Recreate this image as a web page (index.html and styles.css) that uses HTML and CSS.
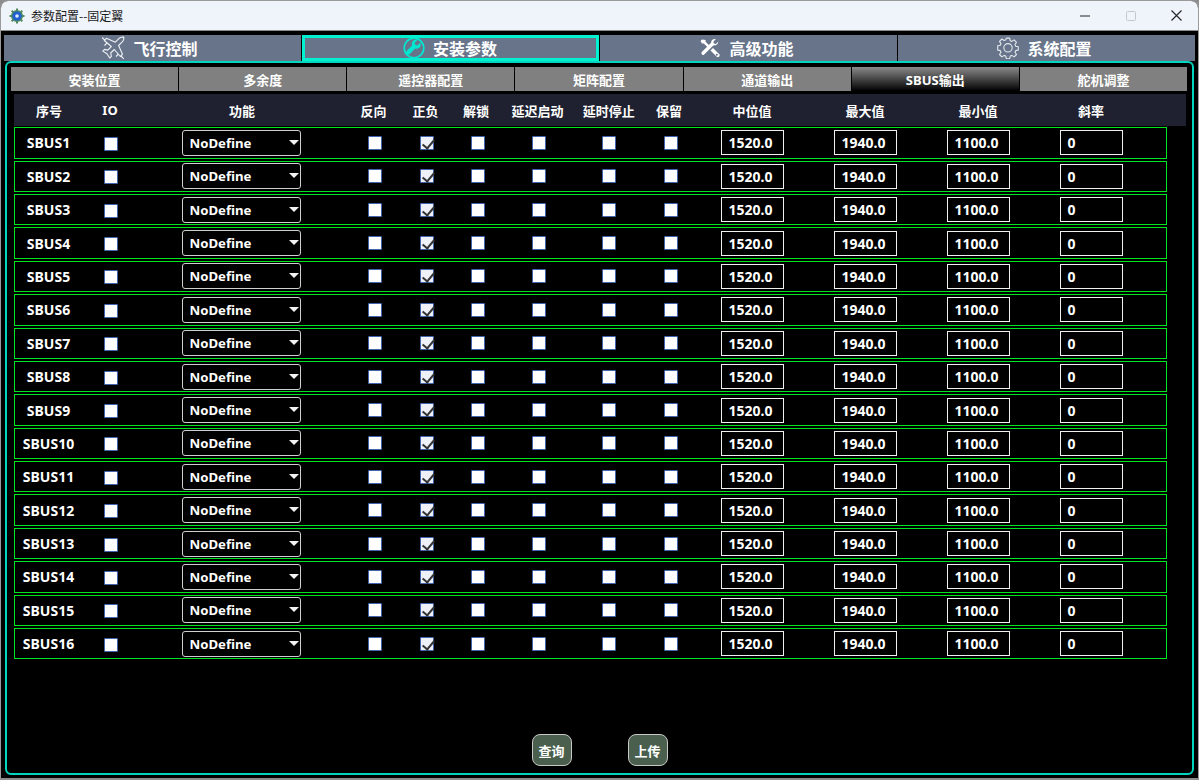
FILE: index.html
```html
<!DOCTYPE html>
<html lang="zh">
<head>
<meta charset="utf-8">
<title>参数配置--固定翼</title>
<link rel="stylesheet" href="styles.css">
</head>
<body>
<div class="window">
  <header class="titlebar">
    <svg class="appicon" viewBox="0 0 16 16"><circle cx="8" cy="8" r="6" fill="#4f8a63"/><g stroke="#4f8a63" stroke-width="2"><path d="M8 0.5V15.5M0.5 8H15.5M2.7 2.7L13.3 13.3M13.3 2.7L2.7 13.3"/></g><circle cx="8" cy="8" r="4.6" fill="#1f5fd0"/><circle cx="8" cy="8" r="1.8" fill="#dfeaff"/></svg>
    <span class="title">参数配置--固定翼</span>
    <div class="controls">
      <svg class="ctl-min" viewBox="0 0 10 10"><path d="M0 5H10" stroke="#222" stroke-width="1"/></svg>
      <svg class="ctl-max" viewBox="0 0 10 10"><rect x=".5" y=".5" width="9" height="9" rx="1" fill="none" stroke="#c4c6cc"/></svg>
      <svg class="ctl-close" viewBox="0 0 11 11"><path d="M.5 .5L10.500 10.500M10.500 .5L.5 10.500" stroke="#222" stroke-width="1.100"/></svg>
    </div>
  </header>
  <nav class="tabs">
    <div class="tab">
      <svg class="ticon plane" viewBox="0 0 24 24" fill="none" stroke="#eef1f5" stroke-width="1.100" stroke-linejoin="round"><path d="M22.800 1.800c-1-1.200-3.600-.6-5.200 1L14.300 6.200 5.500 2.300 3.300 4.500l7 6-3.500 3.600-3.300-.7-1.700 1.700 4.200 2.700 2.700 4.200 1.700-1.700-.7-3.300 3.600-3.500 6 7 2.200-2.200-3.900-8.800 3.400-3.300c1.600-1.600 2.400-4.400 1.500-5.400z"/><path d="M1.200 1.500l2.800 2.800M20 20l2.800 2.800M3.500 9.500l2.500-2.500M15 20.500l2.500-2.500"/></svg>
      <span>飞行控制</span>
    </div>
    <div class="tab active">
      <svg class="ticon" viewBox="0 0 22 22"><circle cx="11" cy="11" r="9.800" fill="none" stroke="#00e6d0" stroke-width="1.700"/><path d="M17.500 5.500l-3.200 2.900-2-.6-.6-2 3-3c-2.800-.8-5.900 1-5.900 4 0 .7.100 1.200.3 1.700l-5.300 5.300c-.9.900-.9 2.200 0 3.100s2.200.9 3.100 0l5.300-5.300c3.200 1.100 6.600-2 5.300-6.100z" fill="#00e6d0"/></svg>
      <span>安装参数</span>
    </div>
    <div class="tab">
      <svg class="ticon" viewBox="0 0 22 22"><path d="M3 2.500L1.500 4l1.500 2.500h1.800l5.500 5.500 1.800-1.800-5.500-5.500V3z" fill="#fff"/><path d="M19.500 4.500l-2.700 2.600-2-.5-.4-1.900 2.500-2.600c-2.500-.7-5 1-4.800 3.700l-9.300 9.300c-1.100 1.100.1 3.400 1.900 2.900l9.600-9.600c2.700.3 5.400-1.400 4.700-3.900z" fill="#fff"/><path d="M11.500 13.500l2.500-2.500 6.500 6.500c.8 1.500-1 3.200-2.500 2.500z" fill="#fff"/><circle cx="17.800" cy="17.800" r="1" fill="#67748a"/></svg>
      <span>高级功能</span>
    </div>
    <div class="tab">
      <svg class="ticon" viewBox="0 0 22 22" fill="none" stroke="#e4e8ee" stroke-width="1.100" stroke-linejoin="round"><path d="M9.300 1.500h3.400l.5 2.600 1.700.7 2.200-1.500 2.400 2.400-1.500 2.200.7 1.700 2.600.5v3.400l-2.600.5-.7 1.700 1.500 2.200-2.400 2.400-2.200-1.500-1.700.7-.5 2.600H9.300l-.5-2.600-1.700-.7-2.200 1.500-2.400-2.400 1.500-2.200-.7-1.700-2.600-.5V9.200l2.600-.5.7-1.700-1.500-2.200 2.400-2.400 2.200 1.500 1.700-.7z" transform="translate(0 -.4)"/><circle cx="11" cy="10.800" r="4.200"/></svg>
      <span>系统配置</span>
    </div>
  </nav>
  <main class="panel">
    <div class="subtabs">
      <div class="subtab">安装位置</div>
      <div class="subtab">多余度</div>
      <div class="subtab">遥控器配置</div>
      <div class="subtab">矩阵配置</div>
      <div class="subtab">通道输出</div>
      <div class="subtab on">SBUS输出</div>
      <div class="subtab">舵机调整</div>
    </div>
    <div class="head">
      <span>序号</span><span>IO</span><span>功能</span><span>反向</span><span>正负</span><span>解锁</span><span>延迟启动</span><span>延时停止</span><span>保留</span><span>中位值</span><span>最大值</span><span>最小值</span><span>斜率</span>
    </div>
    <div class="rows">
      <div class="row"><span class="name">SBUS1</span><i class="cb io"></i><div class="sel">NoDefine</div><i class="cb"></i><i class="cb ck"></i><i class="cb"></i><i class="cb"></i><i class="cb"></i><i class="cb"></i><div class="num">1520.0</div><div class="num">1940.0</div><div class="num">1100.0</div><div class="num">0</div></div>
      <div class="row"><span class="name">SBUS2</span><i class="cb io"></i><div class="sel">NoDefine</div><i class="cb"></i><i class="cb ck"></i><i class="cb"></i><i class="cb"></i><i class="cb"></i><i class="cb"></i><div class="num">1520.0</div><div class="num">1940.0</div><div class="num">1100.0</div><div class="num">0</div></div>
      <div class="row"><span class="name">SBUS3</span><i class="cb io"></i><div class="sel">NoDefine</div><i class="cb"></i><i class="cb ck"></i><i class="cb"></i><i class="cb"></i><i class="cb"></i><i class="cb"></i><div class="num">1520.0</div><div class="num">1940.0</div><div class="num">1100.0</div><div class="num">0</div></div>
      <div class="row"><span class="name">SBUS4</span><i class="cb io"></i><div class="sel">NoDefine</div><i class="cb"></i><i class="cb ck"></i><i class="cb"></i><i class="cb"></i><i class="cb"></i><i class="cb"></i><div class="num">1520.0</div><div class="num">1940.0</div><div class="num">1100.0</div><div class="num">0</div></div>
      <div class="row"><span class="name">SBUS5</span><i class="cb io"></i><div class="sel">NoDefine</div><i class="cb"></i><i class="cb ck"></i><i class="cb"></i><i class="cb"></i><i class="cb"></i><i class="cb"></i><div class="num">1520.0</div><div class="num">1940.0</div><div class="num">1100.0</div><div class="num">0</div></div>
      <div class="row"><span class="name">SBUS6</span><i class="cb io"></i><div class="sel">NoDefine</div><i class="cb"></i><i class="cb ck"></i><i class="cb"></i><i class="cb"></i><i class="cb"></i><i class="cb"></i><div class="num">1520.0</div><div class="num">1940.0</div><div class="num">1100.0</div><div class="num">0</div></div>
      <div class="row"><span class="name">SBUS7</span><i class="cb io"></i><div class="sel">NoDefine</div><i class="cb"></i><i class="cb ck"></i><i class="cb"></i><i class="cb"></i><i class="cb"></i><i class="cb"></i><div class="num">1520.0</div><div class="num">1940.0</div><div class="num">1100.0</div><div class="num">0</div></div>
      <div class="row"><span class="name">SBUS8</span><i class="cb io"></i><div class="sel">NoDefine</div><i class="cb"></i><i class="cb ck"></i><i class="cb"></i><i class="cb"></i><i class="cb"></i><i class="cb"></i><div class="num">1520.0</div><div class="num">1940.0</div><div class="num">1100.0</div><div class="num">0</div></div>
      <div class="row"><span class="name">SBUS9</span><i class="cb io"></i><div class="sel">NoDefine</div><i class="cb"></i><i class="cb ck"></i><i class="cb"></i><i class="cb"></i><i class="cb"></i><i class="cb"></i><div class="num">1520.0</div><div class="num">1940.0</div><div class="num">1100.0</div><div class="num">0</div></div>
      <div class="row"><span class="name">SBUS10</span><i class="cb io"></i><div class="sel">NoDefine</div><i class="cb"></i><i class="cb ck"></i><i class="cb"></i><i class="cb"></i><i class="cb"></i><i class="cb"></i><div class="num">1520.0</div><div class="num">1940.0</div><div class="num">1100.0</div><div class="num">0</div></div>
      <div class="row"><span class="name">SBUS11</span><i class="cb io"></i><div class="sel">NoDefine</div><i class="cb"></i><i class="cb ck"></i><i class="cb"></i><i class="cb"></i><i class="cb"></i><i class="cb"></i><div class="num">1520.0</div><div class="num">1940.0</div><div class="num">1100.0</div><div class="num">0</div></div>
      <div class="row"><span class="name">SBUS12</span><i class="cb io"></i><div class="sel">NoDefine</div><i class="cb"></i><i class="cb ck"></i><i class="cb"></i><i class="cb"></i><i class="cb"></i><i class="cb"></i><div class="num">1520.0</div><div class="num">1940.0</div><div class="num">1100.0</div><div class="num">0</div></div>
      <div class="row"><span class="name">SBUS13</span><i class="cb io"></i><div class="sel">NoDefine</div><i class="cb"></i><i class="cb ck"></i><i class="cb"></i><i class="cb"></i><i class="cb"></i><i class="cb"></i><div class="num">1520.0</div><div class="num">1940.0</div><div class="num">1100.0</div><div class="num">0</div></div>
      <div class="row"><span class="name">SBUS14</span><i class="cb io"></i><div class="sel">NoDefine</div><i class="cb"></i><i class="cb ck"></i><i class="cb"></i><i class="cb"></i><i class="cb"></i><i class="cb"></i><div class="num">1520.0</div><div class="num">1940.0</div><div class="num">1100.0</div><div class="num">0</div></div>
      <div class="row"><span class="name">SBUS15</span><i class="cb io"></i><div class="sel">NoDefine</div><i class="cb"></i><i class="cb ck"></i><i class="cb"></i><i class="cb"></i><i class="cb"></i><i class="cb"></i><div class="num">1520.0</div><div class="num">1940.0</div><div class="num">1100.0</div><div class="num">0</div></div>
      <div class="row"><span class="name">SBUS16</span><i class="cb io"></i><div class="sel">NoDefine</div><i class="cb"></i><i class="cb ck"></i><i class="cb"></i><i class="cb"></i><i class="cb"></i><i class="cb"></i><div class="num">1520.0</div><div class="num">1940.0</div><div class="num">1100.0</div><div class="num">0</div></div>
    </div>
    <footer class="actions">
      <button class="btn">查询</button>
      <button class="btn">上传</button>
    </footer>
  </main>
</div>
</body>
</html>
```
FILE: styles.css
```css
* { box-sizing: border-box; }
html, body { margin: 0; height: 100%; }
body {
  background: #8d8d8d;
  font-family: "Noto Sans", "Noto Sans CJK SC", sans-serif;
  overflow: hidden;
}
.window {
  width: 1199px;
  height: 778px;
  background: #000;
  border: 1px solid #9a9a9a;
  border-bottom: 0;
  border-radius: 8px 8px 0 0;
  display: flex;
  flex-direction: column;
  overflow: hidden;
}
.titlebar {
  height: 30px;
  flex: none;
  background: #eff3fa;
  border-bottom: 1px solid #8c8c8c;
  display: flex;
  align-items: center;
  padding-left: 8px;
  color: #1a1a1a;
}
.appicon { width: 16px; height: 16px; flex: none; }
.title {
  font-family: "Noto Sans CJK SC", sans-serif;
  font-size: 12px;
  margin-left: 6px;
}
.controls {
  margin-left: auto;
  display: flex;
  align-items: center;
  padding-right: 16px;
}
.ctl-min { width: 10px; height: 10px; }
.ctl-max { width: 10px; height: 10px; margin-left: 36px; }
.ctl-close { width: 11px; height: 11px; margin-left: 35px; }
.tabs {
  flex: none;
  display: grid;
  grid-template-columns: repeat(4, 1fr);
  grid-template-rows: 26px;
  gap: 1px;
  height: 26px;
  margin: 4px 3px 0;
}
.tab {
  background: #67748a;
  color: #fff;
  font-family: "Noto Sans CJK SC", sans-serif;
  font-weight: 700;
  font-size: 16px;
  line-height: 1;
  min-height: 0;
  display: flex;
  align-items: center;
  justify-content: center;
  gap: 8px;
  padding-right: 4px;
}
.tab.active { border: 3px solid #00f0d0; padding-right: 1px; }
.ticon { width: 22px; height: 22px; flex: none; }
.ticon.plane { width: 24px; height: 24px; margin-left: -2px; }
.panel {
  flex: 1;
  margin: 0 4px 3px;
  border: 2px solid #00d6bf;
  border-radius: 6px;
  padding: 4px 5px 0 4px;
  display: flex;
  flex-direction: column;
  min-height: 0;
}
.subtabs {
  display: grid;
  grid-template-columns: repeat(7, 1fr);
  gap: 1px;
  height: 24px;
  flex: none;
}
.subtab {
  background: #808080;
  color: #fff;
  font-size: 13px;
  font-weight: 700;
  display: flex;
  align-items: center;
  justify-content: center;
}
.subtab.on { background: linear-gradient(#8a8a8a, #000); }
.head, .row {
  display: grid;
  justify-items: center;
  align-items: center;
  color: #fff;
  font-weight: 700;
}
.head {
  flex: none;
  height: 32px;
  margin: 3px 1px 0 3px;
  padding-left: 1px;
  background: #1f2130;
  font-size: 13px;
  grid-template-columns: 68px 54px 210px 53px 51px 50px 73px 69.400px 51.200px 114.800px 111.200px 114.800px 111.200px;
}
.rows {
  flex: none;
  display: grid;
  grid-auto-rows: 31.400px;
  row-gap: 2px;
  margin: 1.200px 20px 0 3px;
}
.row {
  border: 1px solid #00e61e;
  font-size: 14px;
  grid-template-columns: 67px 57px 204px 64px 40px 62px 60px 80px 44px 118px 108px 118px 108px;
}
.cb {
  display: block;
  width: 14px;
  height: 14px;
  background: #fff;
  border: 1px solid #4263ad;
  border-radius: 1px;
  position: relative;
}
.cb.io { margin-top: 2px; }
.cb.ck { background: #eef1f8; }
.cb.ck::after {
  content: "";
  position: absolute;
  left: 4px;
  top: 0;
  width: 5px;
  height: 10px;
  border: solid #333;
  border-width: 0 2px 2px 0;
  transform: rotate(40deg);
}
.sel {
  width: 119px;
  height: 26px;
  border: 1px solid #cfcfcf;
  border-radius: 3px;
  padding-left: 7px;
  font-size: 13.200px;
  display: flex;
  align-items: center;
  position: relative;
}
.sel::after {
  content: "";
  position: absolute;
  right: 1px;
  top: 9px;
  border: solid transparent;
  border-width: 5px 5px 0;
  border-top-color: #f2f2f2;
}
.num {
  width: 63px;
  height: 25px;
  border: 1px solid #f0f0f0;
  padding-left: 7px;
  display: flex;
  align-items: center;
}
.actions {
  margin: auto 0 7px 1px;
  display: flex;
  justify-content: center;
  gap: 56px;
}
.btn {
  width: 40px;
  height: 32px;
  padding: 0;
  background: #4a5f4d;
  color: #fff;
  border: 1px solid #c8c8c8;
  border-radius: 8px;
  font-family: "Noto Sans CJK SC", sans-serif;
  font-size: 13px;
  font-weight: 700;
}
```
